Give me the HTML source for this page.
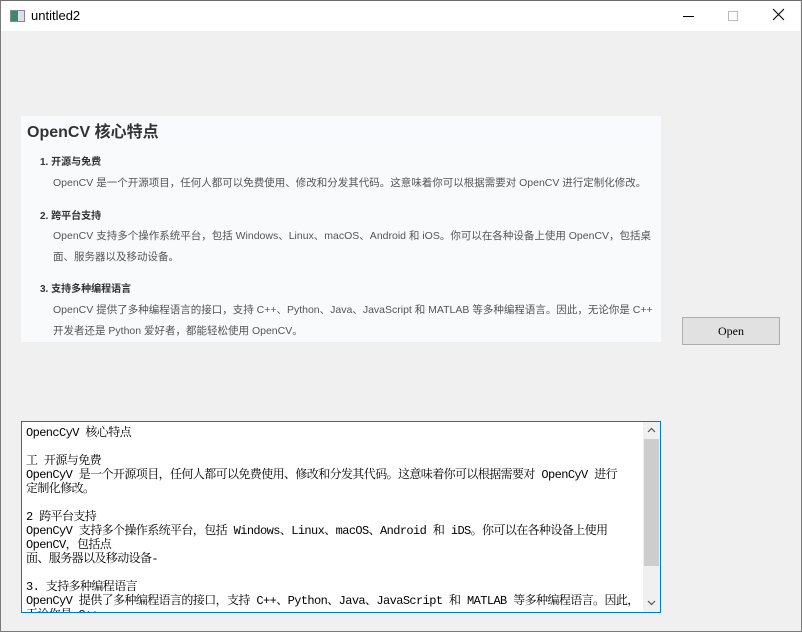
<!DOCTYPE html>
<html><head><meta charset="utf-8"><style>
*{margin:0;padding:0;box-sizing:border-box}
body{width:802px;height:632px;background:#f0f0f0;position:relative;overflow:hidden;font-family:"Liberation Sans","Noto Sans CJK SC",sans-serif}
.win{position:absolute;left:0;top:0;width:802px;height:632px;border:1px solid #7a7a7a;border-top:1px solid #6c6c6c}
.title{position:absolute;left:1px;top:1px;width:799px;height:30px;background:#fff}
.title .t{position:absolute;left:30px;top:7px;font-size:13px;color:#000}
.icon{position:absolute;left:9px;top:9px;width:15px;height:12px;border:1px solid #888;background:linear-gradient(90deg,#3a8a6a 0 55%,#dde 55%)}
.panel{position:absolute;left:21px;top:116px;width:640px;height:226px;background:#f8fafc;color:#333}
.panel h1{position:absolute;left:6px;top:2px;font-size:16px;font-weight:bold;color:#333}
.panel .h{position:absolute;left:19px;font-size:10px;font-weight:bold;color:#333}
.panel .p{position:absolute;left:32px;font-size:10.5px;color:#555;white-space:nowrap}
.btn{position:absolute;left:682px;top:317px;width:98px;height:28px;background:#e1e1e1;border:1px solid #adadad;font-family:"Liberation Serif","Noto Serif CJK SC",serif;font-size:12px;text-align:center;line-height:26px;color:#000}
.te{position:absolute;left:21px;top:421px;width:640px;height:192px;background:#fff;border:1px solid #0078d7;overflow:hidden}
.te .txt{position:absolute;left:4px;top:4px;font-family:"Liberation Mono","Noto Serif CJK SC",monospace;font-size:12px;line-height:14px;color:#000;white-space:pre;width:615px;letter-spacing:-0.6px}
.sb{position:absolute;right:0;top:0;width:17px;height:190px;background:#f0f0f0}
.thumb{position:absolute;left:1px;top:17px;width:15px;height:127px;background:#cdcdcd}
</style></head><body>
<div class="win"></div>
<div class="title"><div class="icon"></div><div class="t">untitled2</div>
<svg style="position:absolute;left:681px;top:8px" width="14" height="14"><line x1="1" y1="7.5" x2="12" y2="7.5" stroke="#000"/></svg>
<svg style="position:absolute;left:726px;top:8px" width="14" height="14"><rect x="1.5" y="2.5" width="9" height="9" fill="none" stroke="#bbb"/></svg>
<svg style="position:absolute;left:771px;top:7px" width="14" height="14"><path d="M1 1L12 12M12 1L1 12" stroke="#000" stroke-width="1.1"/></svg>
</div>
<div class="panel">
<h1>OpenCV 核心特点</h1>
<div class="h" style="top:37px">1. 开源与免费</div>
<div class="p" style="top:59px">OpenCV 是一个开源项目，任何人都可以免费使用、修改和分发其代码。这意味着你可以根据需要对 OpenCV 进行定制化修改。</div>
<div class="h" style="top:91px">2. 跨平台支持</div>
<div class="p" style="top:112px">OpenCV 支持多个操作系统平台，包括 Windows、Linux、macOS、Android 和 iOS。你可以在各种设备上使用 OpenCV，包括桌</div>
<div class="p" style="top:133px">面、服务器以及移动设备。</div>
<div class="h" style="top:164px">3. 支持多种编程语言</div>
<div class="p" style="top:186px">OpenCV 提供了多种编程语言的接口，支持 C++、Python、Java、JavaScript 和 MATLAB 等多种编程语言。因此，无论你是 C++</div>
<div class="p" style="top:207px">开发者还是 Python 爱好者，都能轻松使用 OpenCV。</div>
</div>
<div class="btn">Open</div>
<div class="te"><div class="txt">OpencCyV 核心特点

工 开源与免费
OpenCyV 是一个开源项目，任何人都可以免费使用、修改和分发其代码。这意味着你可以根据需要对 OpenCyV 进行
定制化修改。

2 跨平台支持
OpenCyV 支持多个操作系统平台，包括 Windows、Linux、macOS、Android 和 iDS。你可以在各种设备上使用
OpenCV，包括点
面、服务器以及移动设备-

3. 支持多种编程语言
OpenCyV 提供了多种编程语言的接口，支持 C++、Python、Java、JavaScript 和 MATLAB 等多种编程语言。因此，
无论你是 C++</div>
<div class="sb"><div class="thumb"></div>
<svg style="position:absolute;left:4px;top:5px" width="9" height="6"><path d="M1 5L4.5 1.5L8 5" fill="none" stroke="#555" stroke-width="1.2"/></svg>
<svg style="position:absolute;left:4px;top:178px" width="9" height="6"><path d="M1 1L4.5 4.5L8 1" fill="none" stroke="#555" stroke-width="1.2"/></svg>
</div></div>
</body></html>
